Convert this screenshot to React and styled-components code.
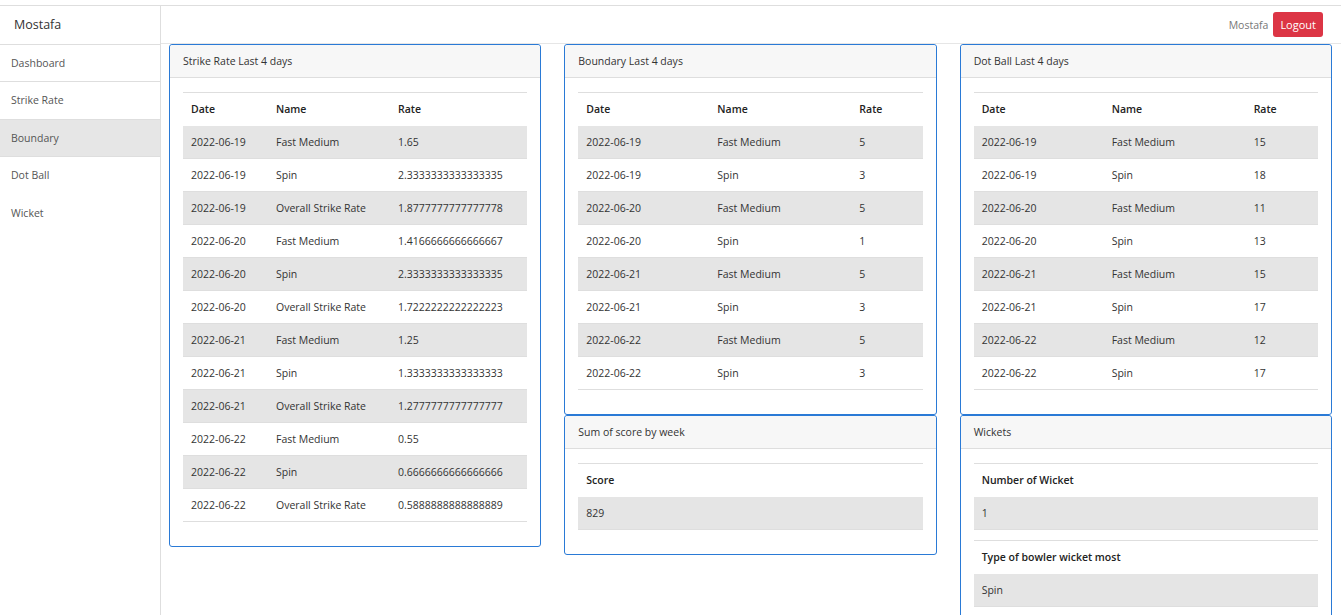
import React from 'react';
import styled, { createGlobalStyle } from 'styled-components';

const strikeRows = [
  ['2022-06-19', 'Fast Medium', '1.65'],
  ['2022-06-19', 'Spin', '2.3333333333333335'],
  ['2022-06-19', 'Overall Strike Rate', '1.8777777777777778'],
  ['2022-06-20', 'Fast Medium', '1.4166666666666667'],
  ['2022-06-20', 'Spin', '2.3333333333333335'],
  ['2022-06-20', 'Overall Strike Rate', '1.7222222222222223'],
  ['2022-06-21', 'Fast Medium', '1.25'],
  ['2022-06-21', 'Spin', '1.3333333333333333'],
  ['2022-06-21', 'Overall Strike Rate', '1.2777777777777777'],
  ['2022-06-22', 'Fast Medium', '0.55'],
  ['2022-06-22', 'Spin', '0.6666666666666666'],
  ['2022-06-22', 'Overall Strike Rate', '0.5888888888888889']
];

const boundaryRows = [
  ['2022-06-19', 'Fast Medium', '5'],
  ['2022-06-19', 'Spin', '3'],
  ['2022-06-20', 'Fast Medium', '5'],
  ['2022-06-20', 'Spin', '1'],
  ['2022-06-21', 'Fast Medium', '5'],
  ['2022-06-21', 'Spin', '3'],
  ['2022-06-22', 'Fast Medium', '5'],
  ['2022-06-22', 'Spin', '3']
];

const dotRows = [
  ['2022-06-19', 'Fast Medium', '15'],
  ['2022-06-19', 'Spin', '18'],
  ['2022-06-20', 'Fast Medium', '11'],
  ['2022-06-20', 'Spin', '13'],
  ['2022-06-21', 'Fast Medium', '15'],
  ['2022-06-21', 'Spin', '17'],
  ['2022-06-22', 'Fast Medium', '12'],
  ['2022-06-22', 'Spin', '17']
];

const menu = [
  { label: 'Dashboard', line: true },
  { label: 'Strike Rate', line: true },
  { label: 'Boundary', line: true, active: true },
  { label: 'Dot Ball' },
  { label: 'Wicket' }
];

const DataTable = ({ cols, head, rows }) => (
  <Table>
    {cols ? (
      <colgroup>
        {cols.map((w, i) => (
          <col key={i} style={{ width: w }} />
        ))}
      </colgroup>
    ) : null}
    <thead>
      <tr>
        {head.map(h => (
          <Th key={h}>{h}</Th>
        ))}
      </tr>
    </thead>
    <tbody>
      {rows.map((r, i) => (
        <Tr key={i} $striped={i % 2 === 0}>
          {r.map((c, j) => (
            <Td key={j}>{c}</Td>
          ))}
        </Tr>
      ))}
    </tbody>
  </Table>
);

const App = () => (
  <>
    <GlobalStyle />
    <Page>
      <Sidebar>
        <Brand>Mostafa</Brand>
        {menu.map(m => (
          <MenuItem key={m.label} $line={m.line} $active={m.active}>
            {m.label}
          </MenuItem>
        ))}
      </Sidebar>
      <Main>
        <TopBar>
          <UserName>Mostafa</UserName>
          <LogoutButton>Logout</LogoutButton>
        </TopBar>
        <Grid>
          <Column>
            <Card>
              <CardHeader>Strike Rate Last 4 days</CardHeader>
              <CardBody>
                <DataTable
                  cols={[85, 122, 'auto']}
                  head={['Date', 'Name', 'Rate']}
                  rows={strikeRows}
                />
              </CardBody>
            </Card>
          </Column>
          <Column>
            <Card>
              <CardHeader>Boundary Last 4 days</CardHeader>
              <CardBody>
                <DataTable
                  cols={[131, 142, 'auto']}
                  head={['Date', 'Name', 'Rate']}
                  rows={boundaryRows}
                />
              </CardBody>
            </Card>
            <Card>
              <CardHeader>Sum of score by week</CardHeader>
              <CardBody>
                <DataTable head={['Score']} rows={[['829']]} />
              </CardBody>
            </Card>
          </Column>
          <Column>
            <Card>
              <CardHeader>Dot Ball Last 4 days</CardHeader>
              <CardBody>
                <DataTable
                  cols={[130, 142, 'auto']}
                  head={['Date', 'Name', 'Rate']}
                  rows={dotRows}
                />
              </CardBody>
            </Card>
            <Card>
              <CardHeader>Wickets</CardHeader>
              <CardBody>
                <DataTable head={['Number of Wicket']} rows={[['1']]} />
                <DataTable head={['Type of bowler wicket most']} rows={[['Spin']]} />
              </CardBody>
            </Card>
          </Column>
        </Grid>
      </Main>
    </Page>
  </>
);

export default App;

const GlobalStyle = createGlobalStyle`
  * { box-sizing: border-box; }
  html, body {
    margin: 0;
    padding: 0;
    background: #fff;
    font-family: "Open Sans", "Noto Sans", sans-serif;
    font-size: 10.5px;
    color: #333;
  }
`;

const Page = styled.div`
  display: flex;
  min-height: 615px;
  margin-top: 5px;
  border-top: 1px solid #dedede;
`;

const Sidebar = styled.nav`
  width: 161px;
  flex-shrink: 0;
  border-right: 1px solid #dedede;
`;

const Brand = styled.div`
  height: 38.5px;
  display: flex;
  align-items: center;
  padding-left: 14px;
  font-size: 12.5px;
  color: #333;
  border-bottom: 1px solid #dedede;
`;

const MenuItem = styled.div`
  height: 37.5px;
  display: flex;
  align-items: center;
  padding-left: 11px;
  color: #555;
  background: ${p => (p.$active ? '#e6e6e6' : '#fff')};
  border-bottom: 1px solid ${p => (p.$line ? '#dedede' : 'transparent')};
`;

const Main = styled.main`
  flex: 1;
  min-width: 0;
`;

const TopBar = styled.header`
  height: 38px;
  display: flex;
  align-items: center;
  justify-content: flex-end;
  gap: 5px;
  padding-right: 18px;
  border-bottom: 1px solid #e6e6e6;
`;

const UserName = styled.span`
  color: #777;
`;

const LogoutButton = styled.button`
  height: 25px;
  padding: 0 7px;
  border: none;
  border-radius: 3px;
  background: #dc3545;
  color: #fff;
  font-family: inherit;
  font-size: 11px;
`;

const Grid = styled.div`
  display: grid;
  grid-template-columns: repeat(3, 1fr);
  column-gap: 23px;
  padding: 0 9px 0 8px;
  align-items: start;
`;

const Column = styled.div`
  display: flex;
  flex-direction: column;
`;

const Card = styled.section`
  border: 1px solid #2a7ad6;
  border-radius: 3px;
  background: #fff;
`;

const CardHeader = styled.div`
  height: 33px;
  display: flex;
  align-items: center;
  padding: 0 13px;
  background: #f7f7f7;
  border-bottom: 1px solid #dedede;
  border-radius: 3px 3px 0 0;
  color: #333;
`;

const CardBody = styled.div`
  padding: 14px 13px 14px;
`;

const Table = styled.table`
  width: 100%;
  border-collapse: collapse;
  margin-bottom: 10px;
  border-top: 1px solid #dedede;
`;

const Th = styled.th`
  height: 33px;
  padding: 0 8px;
  text-align: left;
  font-weight: 600;
  color: #222;
`;

const Tr = styled.tr`
  background: ${p => (p.$striped ? '#e5e5e5' : '#fff')};
  border-bottom: 1px solid #dedede;
`;

const Td = styled.td`
  height: 33px;
  padding: 0 8px;
  color: #333;
`;
